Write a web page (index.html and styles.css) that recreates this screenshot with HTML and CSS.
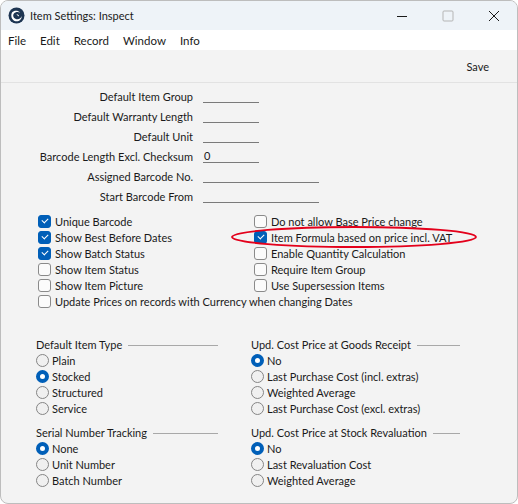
FILE: index.html
```html
<!DOCTYPE html>
<html>
<head>
<meta charset="utf-8">
<link rel="stylesheet" href="styles.css">
</head>
<body>
<div class="window">
  <div class="titlebar">
    <svg class="app-icon" width="17" height="17" viewBox="0 0 17 17">
      <circle cx="8.5" cy="8.5" r="8" fill="#1d3552"/>
      <path d="M4 5.5 C6 3 10 3 12 5.5 C10 4.6 7 4.8 5.6 7 C4.6 8.8 5.6 11.5 8.4 12.2 C11 12.8 13.2 11 13.6 9 C14 12.6 10.6 15 7.4 14.2 C3.6 13.2 2.4 8.6 4 5.5 Z" fill="#ffffff"/>
      <path d="M8.5 7.2 C10 7 11.2 8 11 9.4 C10 8.6 9 8.4 8.5 7.2 Z" fill="#ffffff"/>
    </svg>
    <span class="title">Item Settings: Inspect</span>
    <div class="controls">
      <span class="ctl"><svg width="12" height="12" viewBox="0 0 12 12"><path d="M1 6.5 H11" stroke="#1a1a1a" stroke-width="1"/></svg></span>
      <span class="ctl"><svg width="12" height="12" viewBox="0 0 12 12"><rect x="1" y="1" width="10" height="10" rx="1" fill="none" stroke="#b5b5b5" stroke-width="1"/></svg></span>
      <span class="ctl"><svg width="12" height="12" viewBox="0 0 12 12"><path d="M1 1 L11 11 M11 1 L1 11" stroke="#1a1a1a" stroke-width="1"/></svg></span>
    </div>
  </div>
  <div class="menubar">
    <span>File</span><span>Edit</span><span>Record</span><span>Window</span><span>Info</span>
  </div>
  <div class="toolbar"><span class="save">Save</span></div>

  <div class="content">
    <div class="form">
      <label>Default Item Group</label><div class="field short"></div>
      <label>Default Warranty Length</label><div class="field short"></div>
      <label>Default Unit</label><div class="field short"></div>
      <label>Barcode Length Excl. Checksum</label><div class="field short">0</div>
      <label>Assigned Barcode No.</label><div class="field long"></div>
      <label>Start Barcode From</label><div class="field long"></div>
    </div>

    <div class="checks">
      <div class="chk on"><span class="box"></span>Unique Barcode</div>
      <div class="chk"><span class="box"></span>Do not allow Base Price change</div>
      <div class="chk on"><span class="box"></span>Show Best Before Dates</div>
      <div class="chk on marked"><span class="box"></span>Item Formula based on price incl. VAT
        <svg class="ellipse" width="248" height="24" viewBox="0 0 248 24"><ellipse cx="124" cy="12" rx="122" ry="10" fill="none" stroke="#e3001b" stroke-width="1.8"/></svg>
      </div>
      <div class="chk on"><span class="box"></span>Show Batch Status</div>
      <div class="chk"><span class="box"></span>Enable Quantity Calculation</div>
      <div class="chk"><span class="box"></span>Show Item Status</div>
      <div class="chk"><span class="box"></span>Require Item Group</div>
      <div class="chk"><span class="box"></span>Show Item Picture</div>
      <div class="chk"><span class="box"></span>Use Supersession Items</div>
      <div class="chk wide"><span class="box"></span>Update Prices on records with Currency when changing Dates</div>
    </div>

    <div class="groups">
      <div class="group g-left">
        <div class="ghead"><span>Default Item Type</span><i></i></div>
        <div class="rad"><span class="dot"></span>Plain</div>
        <div class="rad on"><span class="dot"></span>Stocked</div>
        <div class="rad"><span class="dot"></span>Structured</div>
        <div class="rad"><span class="dot"></span>Service</div>
      </div>
      <div class="group g-right">
        <div class="ghead"><span>Upd. Cost Price at Goods Receipt</span><i></i></div>
        <div class="rad on"><span class="dot"></span>No</div>
        <div class="rad"><span class="dot"></span>Last Purchase Cost (incl. extras)</div>
        <div class="rad"><span class="dot"></span>Weighted Average</div>
        <div class="rad"><span class="dot"></span>Last Purchase Cost (excl. extras)</div>
      </div>
      <div class="group g-left">
        <div class="ghead"><span>Serial Number Tracking</span><i></i></div>
        <div class="rad on"><span class="dot"></span>None</div>
        <div class="rad"><span class="dot"></span>Unit Number</div>
        <div class="rad"><span class="dot"></span>Batch Number</div>
      </div>
      <div class="group g-right">
        <div class="ghead"><span>Upd. Cost Price at Stock Revaluation</span><i></i></div>
        <div class="rad on"><span class="dot"></span>No</div>
        <div class="rad"><span class="dot"></span>Last Revaluation Cost</div>
        <div class="rad"><span class="dot"></span>Weighted Average</div>
      </div>
    </div>
  </div>
</div>
</body>
</html>
```

FILE: styles.css
```css
* { box-sizing: border-box; }
html, body { margin: 0; padding: 0; background: #ffffff; }
body {
  font-family: "Lato", "Noto Sans", sans-serif;
  font-size: 11px;
  color: #1a1a1a;
}
.window {
  width: 518px;
  height: 504px;
  border: 1px solid #bdbdbd;
  border-radius: 8px;
  overflow: hidden;
  background: #f3f3f3;
  display: flex;
  flex-direction: column;
}
.titlebar {
  height: 29px;
  flex: none;
  background: #eef3f8;
  display: flex;
  align-items: center;
  padding-left: 7px;
}
.app-icon { margin-right: 5px; }
.title { font-size: 11px; }
.controls {
  margin-left: auto;
  display: flex;
  align-items: center;
  height: 100%;
}
.ctl {
  width: 46px;
  height: 29px;
  display: flex;
  align-items: center;
  justify-content: center;
}
.menubar {
  height: 20px;
  flex: none;
  background: #ffffff;
  display: flex;
  align-items: center;
  padding-left: 7px;
  font-size: 11.5px;
}
.menubar span { margin-right: 14px; }
.toolbar {
  height: 33px;
  flex: none;
  border-bottom: 1px solid #e2e2e2;
  display: flex;
  align-items: center;
  justify-content: flex-end;
  padding-right: 28px;
}
.content { padding-top: 3px; }
.form {
  display: grid;
  grid-template-columns: 192px auto;
  column-gap: 10px;
  grid-auto-rows: 20px;
  align-items: center;
}
.form label { text-align: right; }
.field {
  height: 14px;
  border-bottom: 1px solid #7a7a7a;
  padding-left: 1px;
  line-height: 14px;
}
.field.short { width: 56px; }
.field.long { width: 116px; }

.checks {
  margin-top: 7px;
  display: grid;
  grid-template-columns: 216px auto;
  grid-auto-rows: 16px;
  padding-left: 37px;
}
.chk {
  display: flex;
  align-items: center;
  gap: 4px;
  position: relative;
  white-space: nowrap;
}
.chk.wide { grid-column: 1 / span 2; }
.box {
  width: 13px;
  height: 13px;
  border: 1px solid #8a8a8a;
  border-radius: 3px;
  background: #fbfbfb;
  flex: none;
}
.chk.on .box {
  background: #005fb8;
  border-color: #005fb8;
  position: relative;
}
.chk.on .box::after {
  content: "";
  position: absolute;
  left: 3px;
  top: 2px;
  width: 5px;
  height: 3px;
  border-left: 1px solid #ffffff;
  border-bottom: 1px solid #ffffff;
  transform: rotate(-45deg);
}
.ellipse {
  position: absolute;
  left: -24px;
  top: -4px;
  pointer-events: none;
}

.groups {
  margin-top: 27px;
  display: grid;
  grid-template-columns: 215px auto;
  row-gap: 8px;
  padding-left: 35px;
}
.group { display: flex; flex-direction: column; }
.g-left { width: 182px; }
.g-right { width: 209px; }
.ghead {
  height: 16px;
  display: flex;
  align-items: center;
  gap: 6px;
}
.ghead i {
  flex: 1;
  height: 1px;
  background: #a8a8a8;
  margin-top: 3px;
}
.rad {
  height: 16px;
  display: flex;
  align-items: center;
  gap: 3px;
  white-space: nowrap;
}
.dot {
  width: 13px;
  height: 13px;
  border: 1px solid #858585;
  border-radius: 50%;
  background: #f0f0f0;
  flex: none;
}
.rad.on .dot {
  border: 4px solid #005fb8;
  background: #ffffff;
}
```
